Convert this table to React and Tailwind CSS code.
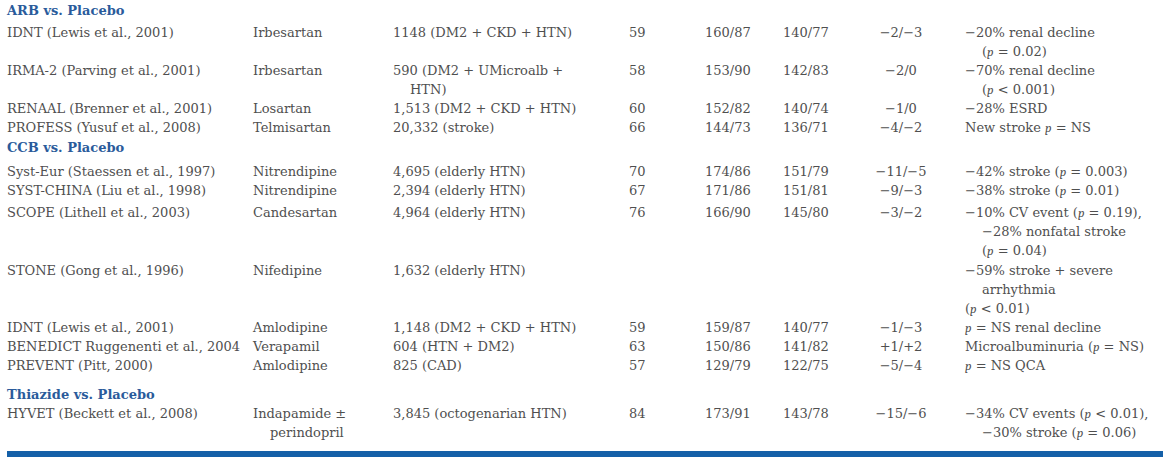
import React from 'react';

const P = () => <i className="font-serif italic">p</i>;

const sections = [
  {
    title: 'ARB vs. Placebo',
    pt: 'pt-0',
    rows: [
      { pt: 'pt-[3px]', c: ['IDNT (Lewis et al., 2001)', 'Irbesartan', '1148 (DM2 + CKD + HTN)', '59', '160/87', '140/77', '−2/−3', ['−20% renal decline', <>(<P /> = 0.02)</>]] },
      { c: ['IRMA-2 (Parving et al., 2001)', 'Irbesartan', ['590 (DM2 + UMicroalb +', 'HTN)'], '58', '153/90', '142/83', '−2/0', ['−70% renal decline', <>(<P /> &lt; 0.001)</>]] },
      { c: ['RENAAL (Brenner et al., 2001)', 'Losartan', '1,513 (DM2 + CKD + HTN)', '60', '152/82', '140/74', '−1/0', '−28% ESRD'] },
      { c: ['PROFESS (Yusuf et al., 2008)', 'Telmisartan', '20,332 (stroke)', '66', '144/73', '136/71', '−4/−2', <>New stroke <P /> = NS</>] },
    ],
  },
  {
    title: 'CCB vs. Placebo',
    pt: 'pt-[1px]',
    rows: [
      { pt: 'pt-[5px]', c: ['Syst-Eur (Staessen et al., 1997)', 'Nitrendipine', '4,695 (elderly HTN)', '70', '174/86', '151/79', '−11/−5', <>−42% stroke (<P /> = 0.003)</>] },
      { c: ['SYST-CHINA (Liu et al., 1998)', 'Nitrendipine', '2,394 (elderly HTN)', '67', '171/86', '151/81', '−9/−3', <>−38% stroke (<P /> = 0.01)</>] },
      { pt: 'pt-[3px]', c: ['SCOPE (Lithell et al., 2003)', 'Candesartan', '4,964 (elderly HTN)', '76', '166/90', '145/80', '−3/−2', [<>−10% CV event (<P /> = 0.19),</>, '−28% nonfatal stroke', <>(<P /> = 0.04)</>]] },
      { pt: 'pt-[1px]', c: ['STONE (Gong et al., 1996)', 'Nifedipine', '1,632 (elderly HTN)', '', '', '', '', ['−59% stroke + severe', 'arrhythmia', { flush: <>(<P /> &lt; 0.01)</> }]] },
      { c: ['IDNT (Lewis et al., 2001)', 'Amlodipine', '1,148 (DM2 + CKD + HTN)', '59', '159/87', '140/77', '−1/−3', <><P /> = NS renal decline</>] },
      { c: ['BENEDICT Ruggenenti et al., 2004', 'Verapamil', '604 (HTN + DM2)', '63', '150/86', '141/82', '+1/+2', <>Microalbuminuria (<P /> = NS)</>] },
      { c: ['PREVENT (Pitt, 2000)', 'Amlodipine', '825 (CAD)', '57', '129/79', '122/75', '−5/−4', <><P /> = NS QCA</>] },
    ],
  },
  {
    title: 'Thiazide vs. Placebo',
    pt: 'pt-[10px]',
    rows: [
      { c: ['HYVET (Beckett et al., 2008)', ['Indapamide ±', 'perindopril'], '3,845 (octogenarian HTN)', '84', '173/91', '143/78', '−15/−6', [<>−34% CV events (<P /> &lt; 0.01),</>, <>−30% stroke (<P /> = 0.06)</>]] },
    ],
  },
];

const colCls = ['', '', '', '', '', '', 'text-center', 'pl-[24px]'];

function Cell({ value, cls }) {
  if (Array.isArray(value)) {
    return (
      <div className={cls}>
        {value.map((line, i) =>
          line && line.flush ? (
            <div key={i}>{line.flush}</div>
          ) : (
            <div key={i} className={i > 0 ? 'pl-[17px]' : ''}>{line}</div>
          )
        )}
      </div>
    );
  }
  return <div className={cls}>{value}</div>;
}

export default function App() {
  return (
    <div className="w-[1163px] h-[462px] bg-white pl-[7px] pt-[1px] text-[13px] leading-[19px] text-[#4f4f4f] font-['DejaVu_Serif',serif] overflow-hidden">
      {sections.map((s) => (
        <div key={s.title}>
          <div className={`${s.pt} font-bold text-[#2a5b9b]`}>{s.title}</div>
          {s.rows.map((r, i) => (
            <div
              key={i}
              className={`grid grid-cols-[246px_140px_236px_76px_78px_78px_80px_1fr] whitespace-nowrap ${r.pt || ''}`}
            >
              {r.c.map((v, j) => (
                <Cell key={j} value={v} cls={colCls[j]} />
              ))}
            </div>
          ))}
        </div>
      ))}
      <div className="mt-[9px] h-[6px] bg-[#1560a8]" />
    </div>
  );
}
